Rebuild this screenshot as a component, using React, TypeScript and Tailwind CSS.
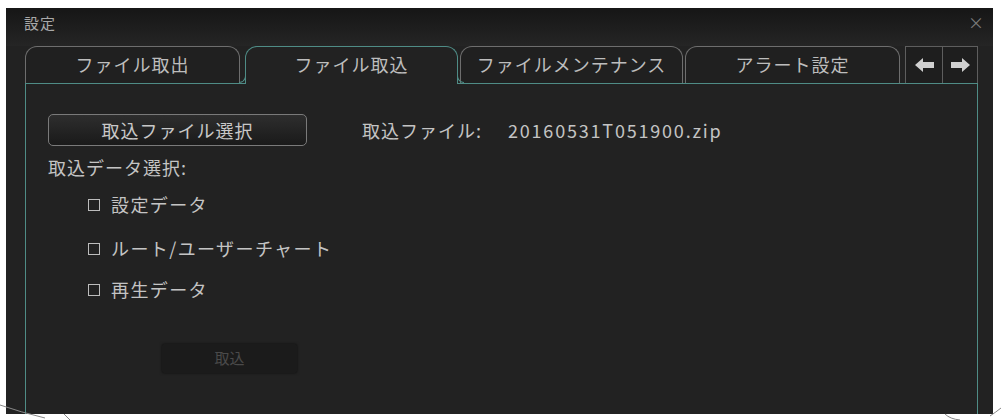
import React from "react";

const font = { fontFamily: '"Noto Sans CJK JP", "Noto Sans", sans-serif' };

function Arrow({ dir }: { dir: "left" | "right" }) {
  return (
    <svg width="21" height="16" viewBox="0 0 21 16" className={dir === "left" ? "" : "rotate-180"}>
      <path d="M1 8 L9 1 L9 5 L20 5 L20 11 L9 11 L9 15 Z" fill="#d0d0d0" />
    </svg>
  );
}

function Tab({ label, active, w }: { label: string; active?: boolean; w: string }) {
  if (active) {
    return (
      <div
        className={`${w} relative h-[38px] -mb-px flex items-center justify-center rounded-t-[12px] border border-b-0 border-[#4f8c86] bg-[#222222] pb-[2px] text-[18px] tracking-[1px] text-[#bdbdbd]`}
      >
        <span className="absolute -left-[7px] bottom-[1px] h-[7px] w-[7px] rounded-br-[7px] border-b border-r border-[#4f8c86]" />
        <span className="absolute -right-[7px] bottom-[1px] h-[7px] w-[7px] rounded-bl-[7px] border-b border-l border-[#4f8c86]" />
        {label}
      </div>
    );
  }
  return (
    <div
      className={`${w} h-[37px] flex items-center justify-center rounded-t-[12px] border border-b-0 border-[#6e6e6e] bg-[#202020] pb-[2px] text-[18px] tracking-[1px] text-[#bdbdbd]`}
    >
      {label}
    </div>
  );
}

function Check({ label, mt }: { label: string; mt: string }) {
  return (
    <div className={`${mt} flex items-center gap-[11px] text-[18px] leading-[27px] tracking-[1.4px] text-[#c4c4c4]`}>
      <span className="h-[12px] w-[12px] border border-[#bdbdbd]" />
      <span>{label}</span>
    </div>
  );
}

export default function App() {
  return (
    <div className="relative h-[420px] w-[1001px] overflow-hidden bg-white" style={font}>
      <div className="ml-[6px] pt-[8px]">
        <div className="flex h-[406px] w-[987px] flex-col bg-[#222222]">
          {/* title bar */}
          <div className="flex h-[38px] items-start justify-between bg-gradient-to-b from-[#161616] to-[#252525] pl-[18px] pr-[9px] pt-[4px]">
            <span className="text-[15px] tracking-[1px] text-[#a9a9a9]">設定</span>
            <span className="text-[16px] leading-[20px] text-[#7a7a7a]">×</span>
          </div>
          {/* tabs */}
          <div className="ml-[19px] flex w-[953px] items-end border-b border-[#4f8c86]">
            <Tab label="ファイル取出" w="w-[215px]" />
            <div className="w-[5px]" />
            <Tab label="ファイル取込" w="w-[213px]" active />
            <div className="w-[2px]" />
            <Tab label="ファイルメンテナンス" w="w-[223px]" />
            <div className="w-[2px]" />
            <Tab label="アラート設定" w="w-[215px]" />
            <div className="w-[5px]" />
            <div className="flex h-[37px] w-[38px] items-center justify-center border border-b-0 border-[#5e5e5e] bg-[#1e1e1e]">
              <Arrow dir="left" />
            </div>
            <div className="flex h-[37px] flex-1 items-center justify-center border border-b-0 border-l-0 border-[#5e5e5e] bg-[#1e1e1e]">
              <Arrow dir="right" />
            </div>
          </div>
          {/* content */}
          <div className="ml-[19px] flex w-[953px] flex-1 flex-col border-x border-[#4f8c86] pl-[22px] pt-[30px]">
            <div className="flex items-center">
              <div className="flex h-[32px] w-[259px] items-center justify-center rounded-[5px] border border-[#7a7a7a] bg-gradient-to-b from-[#2e2e2e] to-[#1a1a1a] text-[18px] tracking-[1px] text-[#c8c8c8]">
                取込ファイル選択
              </div>
              <div className="ml-[55px] flex text-[18px] tracking-[1px] text-[#c4c4c4]">
                <span className="w-[146px]">取込ファイル:</span>
                <span className="tracking-[1.8px]">20160531T051900.zip</span>
              </div>
            </div>
            <div className="mt-[8px] text-[18px] leading-[27px] tracking-[1px] text-[#c4c4c4]">取込データ選択:</div>
            <div className="ml-[40px] flex flex-col">
              <Check label="設定データ" mt="mt-[10px]" />
              <Check label="ルート/ユーザーチャート" mt="mt-[17px]" />
              <Check label="再生データ" mt="mt-[14px]" />
            </div>
            <div className="ml-[114px] mt-[41px] flex h-[29px] w-[135px] items-center justify-center rounded-[2px] bg-[#1b1b1b] text-[15px] text-[#4a4a4a] shadow-[0_0_3px_rgba(0,0,0,0.6)]">
              取込
            </div>
          </div>
        </div>
      </div>
      <svg className="pointer-events-none absolute left-0 top-[400px]" width="1001" height="20" viewBox="0 0 1001 20">
        <path d="M0 5 Q20 12 45 18" stroke="#888" strokeWidth="1" fill="none" />
        <path d="M64 14 L70 20" stroke="#888" strokeWidth="1" fill="none" />
        <path d="M945 14 Q950 19 960 20" stroke="#888" strokeWidth="1" fill="none" />
        <path d="M990 16 Q996 12 1001 8" stroke="#888" strokeWidth="1" fill="none" />
      </svg>
    </div>
  );
}
